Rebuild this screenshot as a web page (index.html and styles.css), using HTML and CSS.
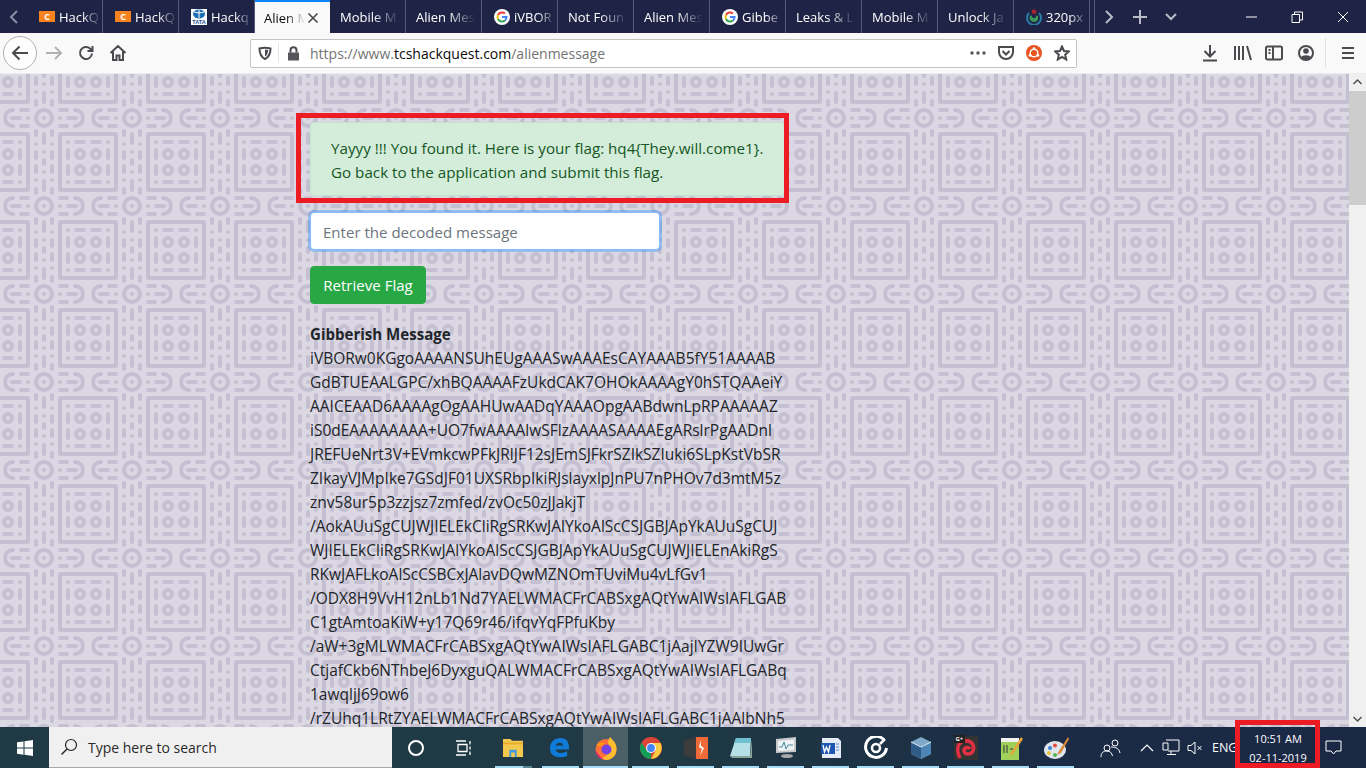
FILE: index.html
```html
<!DOCTYPE html>
<html lang="en">
<head>
<meta charset="utf-8">
<title>Alien Message</title>
<link rel="stylesheet" href="styles.css">
</head>
<body>
<div class="window">
  <header class="tabbar">
    <div class="tab-scroll"><svg width="12" height="16" viewBox="0 0 12 16"><path class="ic-dim" d="M9 2 3 8l6 6"/></svg></div>
    <div class="tab"><span class="fav fav-hack">C</span><span class="tab-label">HackQ</span></div>
    <div class="tab"><span class="fav fav-hack">C</span><span class="tab-label">HackQ</span></div>
    <div class="tab"><span class="fav fav-tata"><svg width="16" height="10" viewBox="0 0 16 10"><ellipse cx="8" cy="5" rx="6" ry="4.6" fill="#1f6fb5"/><path d="M8 1v8M3 3c3 1 7 1 10 0" stroke="#fff" fill="none"/></svg><span class="tata-word">TATA</span></span><span class="tab-label">Hackq</span></div>
    <div class="tab tab-active"><span class="tab-label">Alien M</span><svg class="tab-close" width="12" height="12" viewBox="0 0 12 12"><path d="M1.5 1.5l9 9M10.5 1.5l-9 9"/></svg></div>
    <div class="tab tab-plain"><span class="tab-label">Mobile M</span></div>
    <div class="tab tab-plain"><span class="tab-label">Alien Mes</span></div>
    <div class="tab"><svg class="fav-g" width="16" height="16" viewBox="0 0 16 16"><circle cx="8" cy="8" r="8" fill="#fff"/><path d="M4 6a4.6 4.6 0 0 1 7-1.500" stroke="#ea4335" stroke-width="2" fill="none"/><path d="M4 6a4.6 4.6 0 0 0 0 4" stroke="#fbbc05" stroke-width="2" fill="none"/><path d="M4 10a4.6 4.6 0 0 0 7 1.500" stroke="#34a853" stroke-width="2" fill="none"/><path d="M8 8h4.6a4.6 4.6 0 0 1-1.600 3.500" stroke="#4285f4" stroke-width="2" fill="none"/></svg><span class="tab-label">iVBOR</span></div>
    <div class="tab tab-plain"><span class="tab-label">Not Foun</span></div>
    <div class="tab tab-plain"><span class="tab-label">Alien Mes</span></div>
    <div class="tab"><svg class="fav-g" width="16" height="16" viewBox="0 0 16 16"><circle cx="8" cy="8" r="8" fill="#fff"/><path d="M4 6a4.6 4.6 0 0 1 7-1.500" stroke="#ea4335" stroke-width="2" fill="none"/><path d="M4 6a4.6 4.6 0 0 0 0 4" stroke="#fbbc05" stroke-width="2" fill="none"/><path d="M4 10a4.6 4.6 0 0 0 7 1.500" stroke="#34a853" stroke-width="2" fill="none"/><path d="M8 8h4.6a4.6 4.6 0 0 1-1.600 3.500" stroke="#4285f4" stroke-width="2" fill="none"/></svg><span class="tab-label">Gibbe</span></div>
    <div class="tab tab-plain"><span class="tab-label">Leaks &amp; L</span></div>
    <div class="tab tab-plain"><span class="tab-label">Mobile M</span></div>
    <div class="tab tab-plain"><span class="tab-label">Unlock Ja</span></div>
    <div class="tab"><svg class="fav-g" width="16" height="16" viewBox="0 0 16 16"><path d="M3 4a7 7 0 1 0 10 0" stroke="#2a7da8" stroke-width="2" fill="none"/><path d="M5 6a4 4 0 0 0 3 7 4 4 0 0 0 3-7l-2 3H7z" fill="#3a9a5c"/><circle cx="8" cy="2.800" r="2.400" fill="#a8232c"/></svg><span class="tab-label">320px</span></div>
    <div class="tab-tools">
      <svg width="30" height="16" viewBox="0 0 30 16"><path class="ic-light" d="M11 2l6 6-6 6"/></svg>
      <svg width="30" height="16" viewBox="0 0 30 16"><path class="ic-light" d="M15 1v14M8 8h14"/></svg>
      <svg width="32" height="16" viewBox="0 0 32 16"><path class="ic-light" d="M11 5l5 5 5-5"/></svg>
    </div>
    <div class="win-ctrls">
      <svg width="46" height="14" viewBox="0 0 46 14"><path class="ic-win" d="M18 7h11"/></svg>
      <svg width="46" height="14" viewBox="0 0 46 14"><path class="ic-win" d="M18 4.500h7.500v8H18zM20.500 4.500V2h8v8h-3"/></svg>
      <svg width="46" height="14" viewBox="0 0 46 14"><path class="ic-win" d="M18 2l10 10M28 2L18 12"/></svg>
    </div>
  </header>

  <nav class="toolbar">
    <div class="back-btn"><svg width="20" height="18" viewBox="0 0 20 18"><path class="ic" d="M18 9H3M9.500 2.500L3 9l6.500 6.500"/></svg></div>
    <div class="tool-btn"><svg width="18" height="16" viewBox="0 0 18 16"><path class="ic-off" d="M1 8h15M10 2l6 6-6 6"/></svg></div>
    <div class="tool-btn"><svg width="18" height="18" viewBox="0 0 18 18"><path class="ic" d="M15 9.500A6 6 0 1 1 13 4.500L15.500 7M15.500 2v5h-5"/></svg></div>
    <div class="tool-btn"><svg width="18" height="18" viewBox="0 0 18 18"><path class="ic" d="M1.500 9L9 2l7.500 7M4 7.500V16h3.500v-4.500h3V16H14V7.500"/></svg></div>
    <div class="urlbar">
      <svg class="url-shield" width="14" height="14" viewBox="0 0 14 14"><path class="ic" d="M1.500 2.500c3-.8 8-.8 11 0 0 5-1.500 8.500-5.500 10.500-4-2-5.500-5.500-5.500-10.500z"/><path d="M7 3.500v7c2-1.400 3-3.400 3.200-6.600z" fill="#4a4a4f"/></svg>
      <span class="url-sep"></span>
      <svg class="url-lock" width="13" height="15" viewBox="0 0 13 15"><path d="M1 6.500h11v8H1z" fill="#55555a"/><path class="ic" d="M3.500 6.500V4.200a3 3 0 0 1 6 0v2.300"/></svg>
      <span class="url-text">https://www.<b class="url-host">tcshackquest.com</b>/alienmessage</span>
      <span class="url-actions">
        <svg width="16" height="4" viewBox="0 0 16 4"><circle cx="2" cy="2" r="1.700" fill="#55555a"/><circle cx="8" cy="2" r="1.700" fill="#55555a"/><circle cx="14" cy="2" r="1.700" fill="#55555a"/></svg>
        <svg width="16" height="14" viewBox="0 0 16 14"><path class="ic" d="M1 1h14v5a7 7 0 0 1-14 0z"/><path class="ic" d="M4.500 5L8 8.500 11.500 5"/></svg>
        <svg width="16" height="16" viewBox="0 0 16 16"><circle cx="8" cy="8" r="8" fill="#e95420"/><circle cx="8" cy="8" r="3.800" fill="none" stroke="#fff" stroke-width="1.400"/><circle cx="8" cy="3.600" r="1.300" fill="#fff"/><circle cx="4" cy="10.400" r="1.300" fill="#fff"/><circle cx="12" cy="10.400" r="1.300" fill="#fff"/></svg>
        <svg width="16" height="16" viewBox="0 0 16 16"><path class="ic" d="M8 1.500l2 4.500 4.800.5-3.600 3.200 1 4.800L8 12l-4.200 2.500 1-4.800L1.200 6.500 6 6z"/></svg>
      </span>
    </div>
    <div class="tool-right">
      <svg width="32" height="18" viewBox="0 0 32 18"><path class="ic" d="M16 1v11M10.500 7l5.500 5.500L21.500 7M9 16.500h14"/></svg>
      <svg width="32" height="18" viewBox="0 0 32 18"><path class="ic" d="M9 2v14M13 2v14M17 2v14M21 2l4 14"/></svg>
      <svg width="32" height="18" viewBox="0 0 32 18"><path class="ic" d="M9.500 2.500h13a1.500 1.500 0 0 1 1.500 1.500v10a1.500 1.500 0 0 1-1.500 1.500h-13A1.500 1.500 0 0 1 8 14V4a1.500 1.500 0 0 1 1.500-1.500zM15 2.500v13M10.500 6h2M10.500 9h2"/></svg>
      <svg width="32" height="18" viewBox="0 0 32 18"><circle class="ic" cx="16" cy="9" r="7"/><circle cx="16" cy="7" r="2.800" fill="#4a4a4f"/><path d="M11 13.500c1-3 9-3 10 0a7 7 0 0 1-10 0z" fill="#4a4a4f"/></svg>
    </div>
    <span class="tool-sep"></span>
    <div class="tool-menu"><svg width="14" height="14" viewBox="0 0 14 14"><path class="ic" d="M1 2h12M1 7h12M1 12h12"/></svg></div>
  </nav>

  <main class="viewport">
    <div class="page">
      <div class="alert">Yayyy !!! You found it. Here is your flag: hq4{They.will.come1}.<br>Go back to the application and submit this flag.</div>
      <input class="decoded" type="text" placeholder="Enter the decoded message">
      <button class="retrieve" type="button">Retrieve Flag</button>
      <h1 class="gib-title">Gibberish Message</h1>
      <p class="gib">iVBORw0KGgoAAAANSUhEUgAAASwAAAEsCAYAAAB5fY51AAAAB<br>GdBTUEAALGPC/xhBQAAAAFzUkdCAK7OHOkAAAAgY0hSTQAAeiY<br>AAICEAAD6AAAAgOgAAHUwAADqYAAAOpgAABdwnLpRPAAAAAZ<br>iS0dEAAAAAAAA+UO7fwAAAAlwSFlzAAAASAAAAEgARslrPgAADnl<br>JREFUeNrt3V+EVmkcwPFkJRlJF12sJEmSJFkrSZIkSZIuki6SLpKstVbSR<br>ZIkayVJMpIke7GSdJF01UXSRbpIkiRJslayxlpJnPU7nPHOv7d3mtM5z<br>znv58ur5p3zzjsz7zmfed/zvOc50zJJakjT<br>/AokAUuSgCUJWJIELEkCliRgSRKwJAlYkoAlScCSJGBJApYkAUuSgCUJ<br>WJIELEkCliRgSRKwJAlYkoAlScCSJGBJApYkAUuSgCUJWJIELEnAkiRgS<br>RKwJAFLkoAlScCSBCxJAlavDQwMZNOmTUviMu4vLfGv1<br>/ODX8H9VvH12nLb1Nd7YAELWMACFrCABSxgAQtYwAIWsIAFLGAB<br>C1gtAmtoaKiW+y17Q69r46/ifqvYqFPfuKby<br>/aW+3gMLWMACFrCABSxgAQtYwAIWsIAFLGABC1jAajIYZW9IUwGr<br>CtjafCkb6NThbeJ6DyxguQALWMACFrCABSxgAQtYwAIWsIAFLGABq<br>1awqljJ69ow6<br>/rZUhq1LRtZYAELWMACFrCABSxgAQtYwAIWsIAFLGABC1jAAlbNh5</p>
      <div class="mark mark-flag"></div>
    </div>
    <div class="scrollbar">
      <svg class="sb-arrow" width="17" height="17" viewBox="0 0 17 17"><path d="M4.500 10l4-4 4 4" /></svg>
      <div class="sb-thumb"></div>
      <div class="sb-space"></div>
      <svg class="sb-arrow" width="17" height="17" viewBox="0 0 17 17"><path d="M4.500 7l4 4 4-4" /></svg>
    </div>
  </main>

  <footer class="taskbar">
    <div class="start"><svg width="16" height="16" viewBox="0 0 16 16"><path d="M0 2.300l6.500-.9v6.200H0zM7.500 1.300L16 0v7.600H7.500zM0 8.500h6.500v6.200L0 13.700zM7.500 8.500H16V16l-8.500-1.200z" fill="#fff"/></svg></div>
    <div class="search">
      <svg width="18" height="18" viewBox="0 0 18 18"><circle cx="11" cy="7" r="5.500" fill="none" stroke="#222" stroke-width="1.200"/><path d="M7 11l-5.500 5.500" stroke="#222" stroke-width="1.400"/></svg>
      <span class="search-text">Type here to search</span>
    </div>
    <div class="sys-btn"><svg width="18" height="18" viewBox="0 0 18 18"><circle cx="9" cy="9" r="7" fill="none" stroke="#fff" stroke-width="2"/></svg></div>
    <div class="sys-btn sys-gap"><svg width="18" height="16" viewBox="0 0 18 16"><path d="M1 1h10M1 15h10M3 4.500h9v7H3zM15 1v3.500M15 6.500v3M15 11.500V15" fill="none" stroke="#fff" stroke-width="1.300"/></svg></div>

    <div class="app app-on app-explorer"><svg width="22" height="20" viewBox="0 0 24 22"><path d="M1 1h8l2 2h12v18H1z" fill="#f3c84f"/><path d="M1 5h22v2H1z" fill="#e5a92c"/><path d="M8 13h8v8H8z" fill="#3c9be0"/><path d="M10 16h4v5h-4z" fill="#f3c84f"/></svg></div>
    <div class="app app-on app-edge"><svg width="21" height="21" viewBox="0 0 22 22"><path d="M1 12C1 5 6 1 12 1c6 0 9 4 9 10v2H7c.5 4 6 5 12 2v5c-8 3-18 1-18-8zm6-3h8c0-4-7-4-8 0z" fill="#0f7ad8"/></svg></div>
    <div class="app app-on app-active"><svg width="24" height="24" viewBox="0 0 24 24"><circle cx="12" cy="13.500" r="10.500" fill="#ff7139"/><path d="M22.500 13.500A10.500 10.500 0 0 1 6 22C14 21 18 15 14 7c0-2 1-5 2-6 2 3 7 5 6.500 12.500z" fill="#ffbd2e"/><path d="M1.500 13.500A10.500 10.500 0 0 0 12 24c-5-2-9-6-10.500-10.500z" fill="#e31587"/><circle cx="12.500" cy="13.500" r="5" fill="#7543e3"/><path d="M3 9c2-3 6-3 8-1-2 0-3 1-3 2-2 0-4 0-5-1z" fill="#ff980e"/></svg></div>
    <div class="app app-on"><svg width="22" height="22" viewBox="0 0 22 22"><circle cx="11" cy="11" r="11" fill="#db4437"/><path d="M11 22A11 11 0 0 1 1.500 5.500L7 14l4 2z" fill="#0f9d58"/><path d="M11 6h9.500A11 11 0 0 1 11 22l4.500-8z" fill="#ffcd40"/><circle cx="11" cy="11" r="5" fill="#fff"/><circle cx="11" cy="11" r="3.900" fill="#4285f4"/></svg></div>
    <div class="app app-on"><svg width="24" height="22" viewBox="0 0 24 22"><path d="M0 3l12-3v22L0 19z" fill="#3c3c3c"/><path d="M12 0h12v22H12z" fill="#ef6a36"/><path d="M17 3l-2 7 3 2-2 7 4-8-3-2z" fill="#fff"/></svg></div>
    <div class="app app-on"><svg width="24" height="22" viewBox="0 0 24 22"><path d="M7 1h15l-1 18H1z" fill="#b5dfe6"/><path d="M1 19h20l2-16v18H3z" fill="#8aa39b"/><path d="M7 1h15l-.6 5H5z" fill="#6fbfcf"/></svg></div>
    <div class="app app-on"><svg width="24" height="22" viewBox="0 0 24 22"><path d="M2 2l20-2v15L2 16z" fill="#c9c9c9"/><path d="M4 4l16-1.500V13L4 14z" fill="#eef2f5"/><path d="M5 10l3 0 2-5 2 7 2-4h5" fill="none" stroke="#4a8b9e"/><ellipse cx="13" cy="19" rx="6" ry="2" fill="#aaa"/></svg></div>
    <div class="app app-on"><svg width="22" height="22" viewBox="0 0 22 22"><path d="M2 1h16l3 3v17H2z" fill="#e6ecf7"/><path d="M1 6h14v11H1z" fill="#1e56b0"/><path d="M3 8l1.500 7 2-5 2 5L10 8" fill="none" stroke="#fff" stroke-width="1.300"/><path d="M16 7h3M16 10h3M16 13h3" stroke="#5a86c8"/></svg></div>
    <div class="app app-on"><svg width="24" height="24" viewBox="0 0 24 24"><path d="M20 4A10.500 10.500 0 1 0 22.500 12" fill="none" stroke="#fff" stroke-width="3"/><circle cx="12" cy="12" r="4" fill="none" stroke="#fff" stroke-width="2.500"/><path d="M16 8l5-5" stroke="#fff" stroke-width="2.500"/></svg></div>
    <div class="app app-on"><svg width="24" height="24" viewBox="0 0 24 24"><path d="M12 1l10 5v12l-10 5-10-5V6z" fill="#7fa8c9"/><path d="M12 11L2 6v12l10 5z" fill="#2e5c86"/><path d="M12 11l10-5v12l-10 5z" fill="#4d86b5"/><path d="M2 6l10 5 10-5" fill="none" stroke="#dfe9f2"/></svg></div>
    <div class="app app-on"><span class="gns-box"><svg width="24" height="24" viewBox="0 0 24 24"><rect width="24" height="24" fill="#333"/><path d="M6 22C2 14 3 6 11 5c7-1 10 5 8 10-2 4-8 4-9 0-.5-3 4-5 6-2" fill="none" stroke="#e23043" stroke-width="3.500"/></svg><span class="gns-tag">G+</span></span></div>
    <div class="app app-on"><svg width="24" height="26" viewBox="0 0 24 26"><path d="M2 3h18v22H2z" fill="#9fd05a"/><path d="M2 3h18v4H2z" fill="#f2f2f2"/><path d="M5 10v8M8 10v8M11 14h3" stroke="#333"/><path d="M22 2L12 18l-2 4 4-3L24 4z" fill="#e8a33a"/></svg></div>
    <div class="app app-on"><svg width="26" height="24" viewBox="0 0 26 24"><ellipse cx="12" cy="14" rx="11" ry="9" fill="#dfe6ee"/><circle cx="7" cy="12" r="2" fill="#3b82d0"/><circle cx="12" cy="9.500" r="2" fill="#e94b3c"/><circle cx="6" cy="17" r="2" fill="#e8c33a"/><circle cx="12" cy="19" r="2" fill="#5ab04c"/><path d="M25 1l-9 14-2 4 4-2L26 3z" fill="#d98a3a"/></svg></div>

    <div class="tray">
      <svg class="tray-people" width="22" height="18" viewBox="0 0 22 18"><circle cx="7" cy="9" r="3" fill="none" stroke="#fff"/><circle cx="15" cy="4" r="3" fill="none" stroke="#fff"/><path d="M1 18c0-4 2-6 6-6 3 0 5 2 5.500 5M11 8c2 0 8 0 9 6" fill="none" stroke="#fff"/></svg>
      <svg class="tray-caret" width="14" height="8" viewBox="0 0 14 8"><path d="M1 7l6-6 6 6" fill="none" stroke="#fff" stroke-width="1.200"/></svg>
      <svg class="tray-net" width="18" height="17" viewBox="0 0 18 17"><path d="M4 1h13v11H6M1 4h5v7H1zM9 12v3M5 15.500h9" fill="none" stroke="#fff"/></svg>
      <svg class="tray-vol" width="16" height="14" viewBox="0 0 16 14"><path d="M1 4.500h3L8 1v12L4 9.500H1zM10.500 5l4 4M14.500 5l-4 4" fill="none" stroke="#fff"/></svg>
      <span class="tray-lang">ENG</span>
      <div class="clock"><span>10:51 AM</span><span>02-11-2019</span></div>
      <svg class="tray-note" width="17" height="15" viewBox="0 0 17 15"><path d="M1 1h15v10h-5l-2.500 3L6 11H1z" fill="none" stroke="#fff"/></svg>
    </div>
    <div class="mark mark-clock"></div>
  </footer>
</div>
</body>
</html>
```
FILE: styles.css
```css
* { box-sizing: border-box; }
html, body { margin: 0; height: 100%; overflow: hidden; }
body { font-family: "Open Sans", "Liberation Sans", sans-serif; color: #212529; }
svg { display: block; flex: none; }

.window { display: flex; flex-direction: column; width: 1366px; height: 768px; }

/* tabs */
.tabbar { display: flex; height: 33px; flex: none; background: #1f2346; color: #fff; align-items: stretch; }
.tab-scroll { width: 27px; display: flex; align-items: center; justify-content: center; }
.tab { width: 76px; display: flex; align-items: center; gap: 4px; padding: 0 1px 0 12px; border-right: 1px solid #55597a; font-size: 13px; min-width: 0; height: 33px; }
.tab-plain { padding: 0 6px 0 10px; }
.tab-label { flex: 1; min-width: 0; overflow: hidden; white-space: nowrap; -webkit-mask-image: linear-gradient(90deg, #000 55%, transparent 100%); mask-image: linear-gradient(90deg, #000 55%, transparent 100%); }
.tab-active { background: #f9f9fa; color: #0c0c0d; border-right: 0; border-top: 2px solid #0a84ff; width: 75px; padding: 0 11px 0 9px; gap: 2px; }
.tab-close { fill: none; stroke: #444; stroke-width: 1.500; }
.fav { flex: none; display: flex; flex-direction: column; align-items: center; }
.fav-hack { width: 16px; height: 11px; background: #f7831f; color: #fff; font-size: 9px; line-height: 11px; font-weight: 700; }
.fav-tata { width: 16px; height: 16px; background: #fff; }
.tata-word { font: 700 5.500px/6px "Liberation Sans", sans-serif; color: #1b4c8f; }
.fav-g { flex: none; }
.tab-tools { display: flex; align-items: center; width: 94px; border-left: 1px solid #55597a; margin-left: 4px; }
.win-ctrls { display: flex; align-items: center; margin-left: auto; }
.ic-dim { fill: none; stroke: #8a8da3; stroke-width: 2; }
.ic-light { fill: none; stroke: #b9bbc9; stroke-width: 2; }
.ic-win { fill: none; stroke: #fff; stroke-width: 1; }

/* toolbar */
.toolbar { height: 41px; flex: none; display: flex; align-items: center; background: #f9f9fa; border-bottom: 1px solid #ededf0; padding-left: 3px; }
.back-btn { width: 34px; height: 34px; border: 1px solid #b1b1b3; border-radius: 50%; background: #fdfdfd; display: flex; align-items: center; justify-content: center; margin-right: 1px; }
.tool-btn { width: 32px; display: flex; justify-content: center; }
.ic { fill: none; stroke: #4a4a4f; stroke-width: 2; }
.ic-off { fill: none; stroke: #b1b1b3; stroke-width: 2; }
.urlbar { display: flex; align-items: center; width: 827px; height: 29px; margin-left: 116px; background: #fff; border: 1px solid #c4c4c4; border-radius: 2px; padding: 0 6px 0 7px; font-size: 14px; color: #737373; }
.url-shield { margin-right: 6px; }
.url-sep { width: 1px; height: 20px; background: #e4e4e6; margin-right: 8px; }
.url-lock { margin-right: 10px; }
.url-text { white-space: nowrap; }
.url-host { font-weight: 400; color: #0c0c0d; }
.url-actions { margin-left: auto; display: flex; align-items: center; gap: 12px; }
.tool-right { display: flex; margin-left: 117px; }
.tool-sep { width: 1px; height: 30px; background: #e0e0e2; margin: 0 15px 0 3px; }
.tool-menu { display: flex; }

/* page */
.viewport { flex: 1; min-height: 0; display: flex; overflow: hidden; }
.page { position: relative; flex: 1; overflow: hidden; padding: 48px 0 0 310px; background-color: #dbd8e3; background-position: 58px 58px; background-image: url("data:image/svg+xml,%3Csvg xmlns='http://www.w3.org/2000/svg' width='88' height='88'%3E%3Cg fill='none' stroke='%23c5c0d1' stroke-width='4' stroke-linecap='round'%3E%3Crect x='2' y='2' width='56' height='56' rx='1' stroke-linecap='butt'/%3E%3Cpath d='M10 10h.01M18 10h8M34 10h8M50 10h.01M10 50h.01M18 50h8M34 50h8M50 50h.01M10 18v8M50 18v8M10 34v8M50 34v8'/%3E%3Ccircle cx='22' cy='22' r='4'/%3E%3Ccircle cx='38' cy='22' r='4'/%3E%3Ccircle cx='22' cy='38' r='4'/%3E%3Ccircle cx='38' cy='38' r='4'/%3E%3Cpath d='M66 -1v4M66 87v4M66 12h.01M66 20v6M66 34v6M66 48h.01M66 57v4M82 -1v4M82 87v4M82 12h.01M82 20v6M82 34v6M82 48h.01M82 57v4M74 2v9M74 20h.01M74 28v4M74 40h.01M74 49v9'/%3E%3Ccircle cx='74' cy='74' r='8'/%3E%3Cpath d='M74 74h.01M58 66h-7M58 82h-7M58 74h.01M50 74h-8M43 66A8 8 0 0 0 43 82M2 66h7M2 82h7M2 74h.01M10 74h8M17 66A8 8 0 0 1 17 82M90 66h7M90 82h7M90 74h.01M98 74h8'/%3E%3C/g%3E%3C/svg%3E"); }
.alert { width: 475px; padding: 13px 20px 11px; background: #d4edda; border: 1px solid #c3e6cb; border-radius: 4px; color: #155724; font-size: 15.200px; line-height: 24px; white-space: nowrap; margin-bottom: 16px; }
.decoded { display: block; width: 350px; height: 38px; padding: 7px 12px 5px; font: 15.050px "Open Sans", sans-serif; color: #495057; background: #fff; border: 1px solid #80bdff; border-radius: 4px; box-shadow: 0 0 0 2px rgba(0, 123, 255, .3); outline: 0; margin-bottom: 16px; }
.decoded::placeholder { color: #6c757d; opacity: 1; }
.retrieve { display: block; width: 116px; height: 38px; padding: 0; font: 15.050px "Open Sans", sans-serif; color: #fff; background: #28a745; border: 1px solid #28a745; border-radius: 4px; margin-bottom: 18px; }
.gib-title { margin: 0; font-size: 15.050px; line-height: 24px; font-weight: 700; }
.gib { margin: 0; font-size: 15.500px; line-height: 24px; white-space: nowrap; }
.mark { position: absolute; border: 5px solid #ed1c24; pointer-events: none; }
.mark-flag { left: 296px; top: 39px; width: 493px; height: 90px; }
.scrollbar { width: 17px; flex: none; background: #f0f0f0; display: flex; flex-direction: column; }
.sb-arrow { flex: none; fill: none; stroke: #505050; stroke-width: 1.500; }
.sb-thumb { height: 114px; background: #cdcdcd; flex: none; }
.sb-space { flex: 1; }

/* taskbar */
.taskbar { position: relative; height: 41px; flex: none; display: flex; align-items: center; background: linear-gradient(90deg, #1f3a45 0, #1f3945 50%, #1b2a45 80%, #1a2845 100%); color: #fff; }
.start { width: 49px; display: flex; justify-content: center; }
.search { width: 343px; height: 41px; display: flex; align-items: center; gap: 10px; padding-left: 11px; background: #f0f0f0; color: #2a2a2a; font-size: 14px; border-bottom: 1px solid #a8a8a8; }
.sys-btn { width: 48px; display: flex; justify-content: center; }
.sys-gap { margin-right: 5px; }
.app { width: 45px; height: 41px; display: flex; align-items: center; justify-content: center; position: relative; }
.app-explorer svg { margin-right: 6px; }
.app-edge svg { margin-right: 3px; }
.app-on::after { content: ""; position: absolute; left: 4px; right: 4px; bottom: 0; height: 2px; background: #a6dcf5; }
.app-explorer::after { left: 2px; right: 6px; background: linear-gradient(90deg, #a6dcf5 76%, #5d8797 76%); }
.app-active { background: #4a5f66; }
.app-active::after { left: 0; right: 0; }
.gns-box { position: relative; display: block; }
.gns-tag { position: absolute; left: 0; top: -1px; font-size: 6px; line-height: 8px; font-weight: 700; color: #fff; background: #222; padding: 0 2px; }
.tray { display: flex; align-items: center; flex: 1; height: 41px; position: relative; }
.tray-people { margin-left: 22px; }
.tray-caret { margin-left: 18px; }
.tray-net { margin-left: 8px; }
.tray-vol { margin-left: 7px; }
.tray-lang { margin-left: 9px; font-size: 12.500px; width: 28px; }
.clock { display: flex; flex-direction: column; align-items: center; width: 76px; font-size: 11px; line-height: 19px; padding-top: 1px; }
.tray-note { margin-left: 9px; }
.mark-clock { right: 46px; top: -7px; width: 85px; height: 48px; }
```
